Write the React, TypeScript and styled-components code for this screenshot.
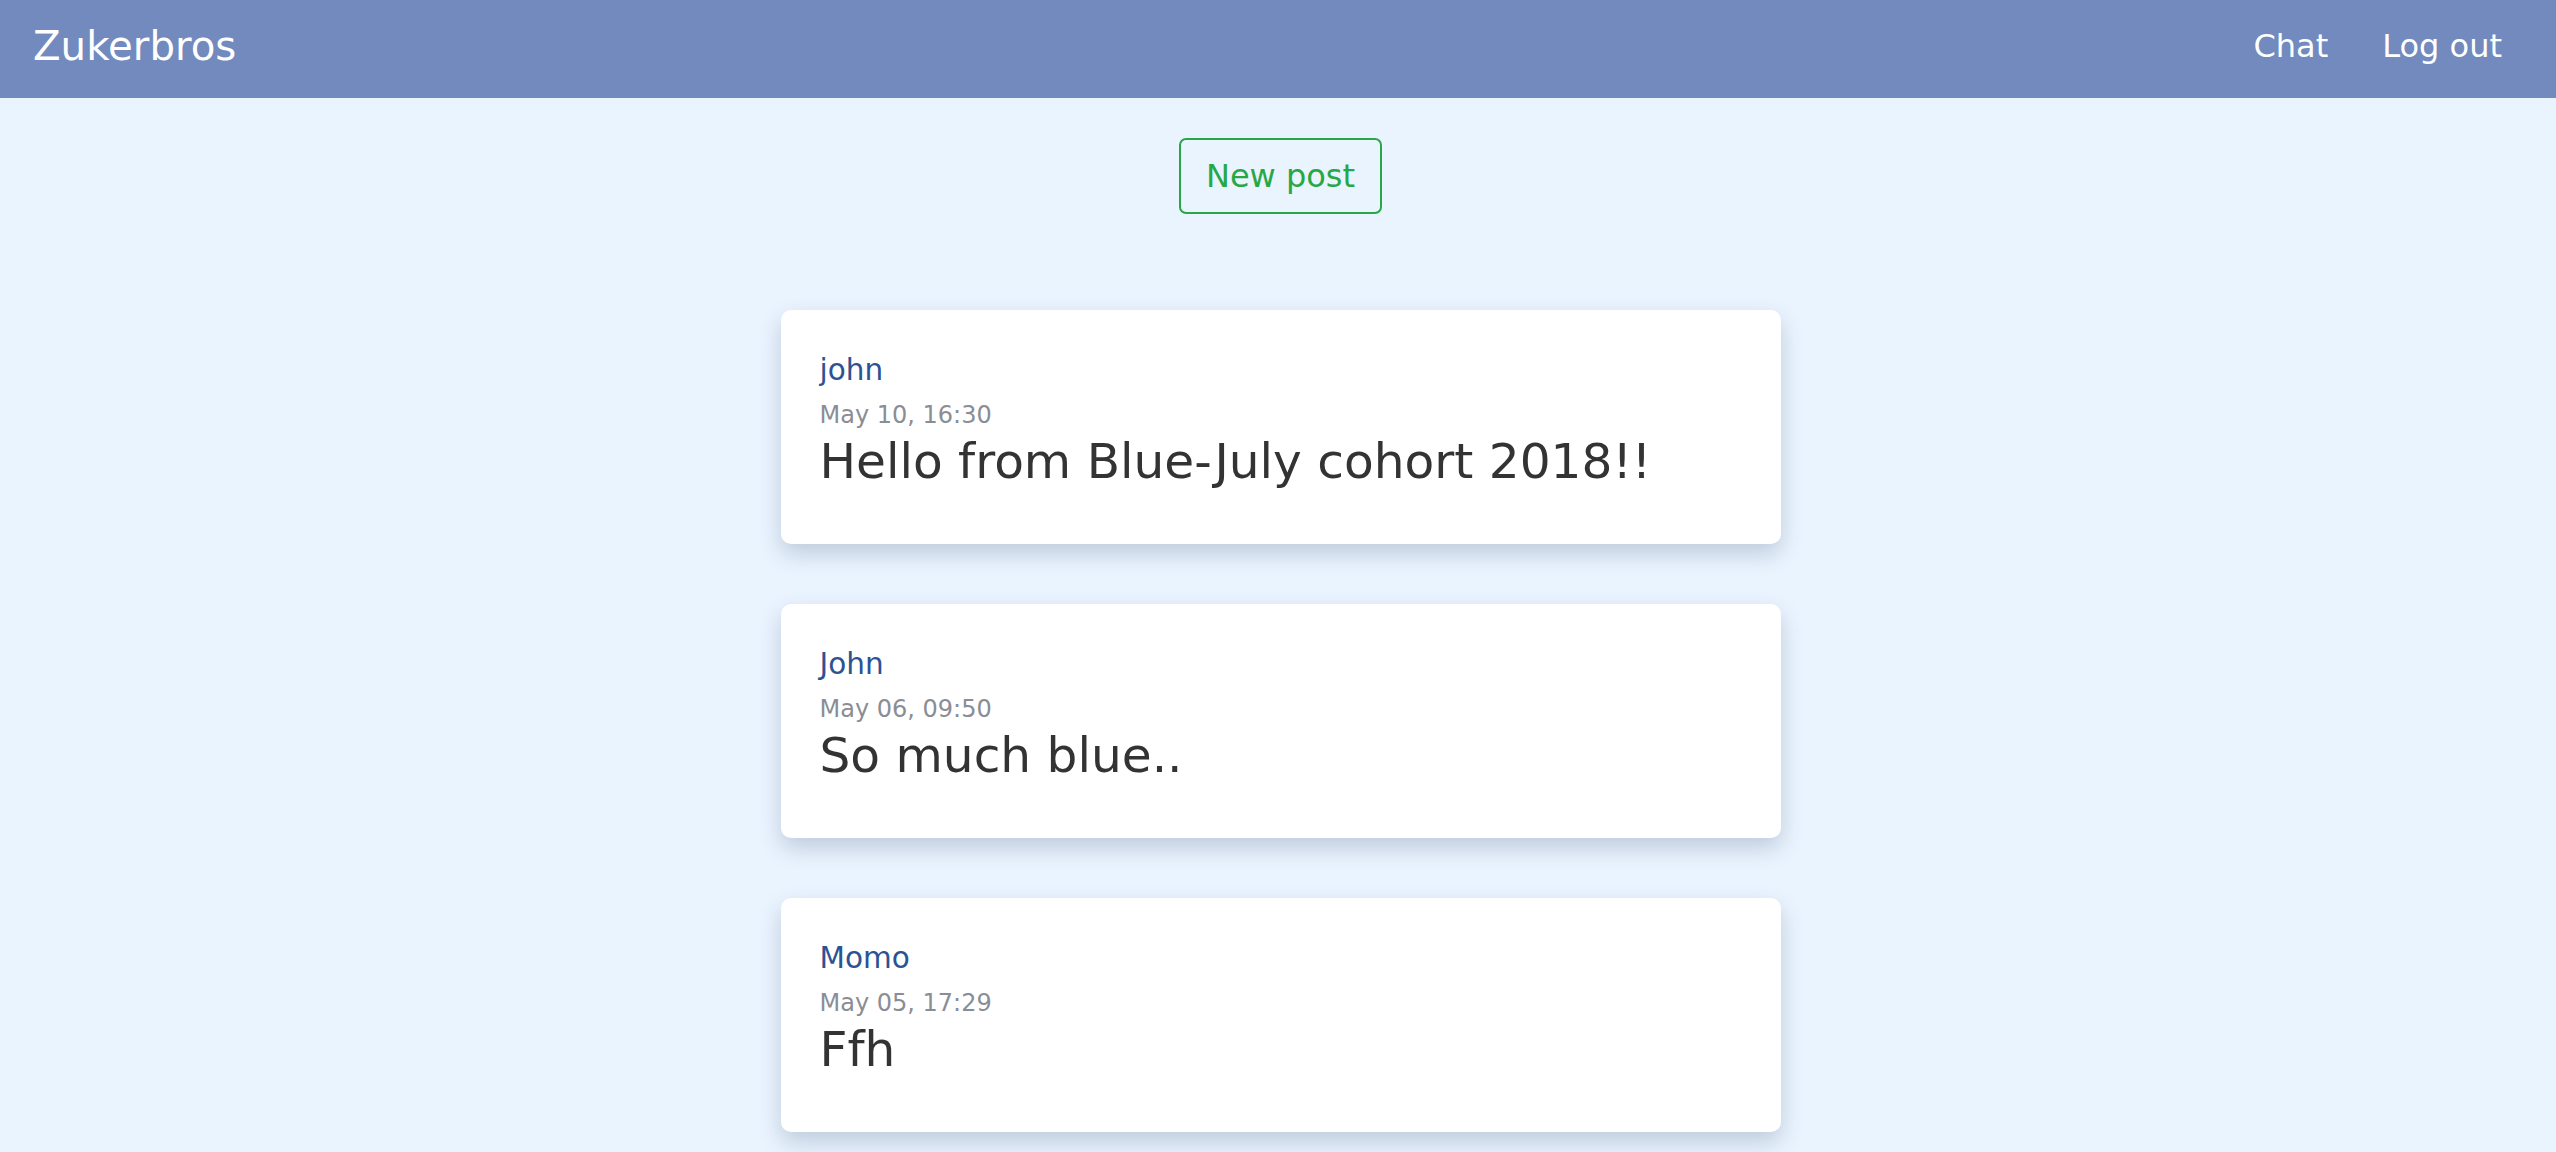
import styled, { createGlobalStyle } from "styled-components";

const GlobalStyle = createGlobalStyle`
  html, body {
    margin: 0;
    padding: 0;
  }

  body {
    background: #eaf4ff;
    font-family: "DejaVu Sans", Verdana, sans-serif;
    color: #333;
  }
`;

const NavBar = styled.header`
  display: flex;
  align-items: center;
  justify-content: space-between;
  height: 98px;
  padding: 0 27px 6px 33px;
  box-sizing: border-box;
  background: #728abe;
`;

const Brand = styled.a`
  font-size: 40.3px;
  color: #fff;
  text-decoration: none;
`;

const NavLinks = styled.nav`
  display: flex;
  align-items: center;
`;

const NavLink = styled.a`
  padding: 0 27px;
  font-size: 32px;
  color: #fff;
  text-decoration: none;
`;

const Main = styled.main`
  display: flex;
  flex-direction: column;
  align-items: center;
  padding: 40px 0 60px 5px;
`;

const NewPostButton = styled.button`
  padding: 17px 25px 16px;
  margin-bottom: 96px;
  font-family: inherit;
  font-size: 32px;
  line-height: 39px;
  color: #28a745;
  background: transparent;
  border: 2px solid #28a745;
  border-radius: 7px;
  cursor: pointer;
`;

const Feed = styled.section`
  display: flex;
  flex-direction: column;
  gap: 60px;
  width: 1000px;
`;

const PostCard = styled.article`
  padding: 39px 39px;
  background: #fff;
  border-radius: 10px;
  box-shadow: 0 10px 22px rgba(40, 62, 95, 0.22);
`;

const Author = styled.a`
  display: block;
  margin-bottom: 6px;
  font-size: 29.5px;
  line-height: 43px;
  color: #2c5292;
  text-decoration: none;
`;

const PostDate = styled.div`
  font-size: 24px;
  line-height: 34px;
  color: #8a8d96;
`;

const PostText = styled.p`
  margin: 0 0 15px;
  font-size: 48.6px;
  line-height: 58px;
  color: #333;
`;

type Post = {
  id: number;
  author: string;
  date: string;
  text: string;
};

const posts: Post[] = [
  { id: 1, author: "john", date: "May 10, 16:30", text: "Hello from Blue-July cohort 2018!!" },
  { id: 2, author: "John", date: "May 06, 09:50", text: "So much blue.." },
  { id: 3, author: "Momo", date: "May 05, 17:29", text: "Ffh" },
];

export default function App() {
  return (
    <>
      <GlobalStyle />
      <NavBar>
        <Brand href="#">Zukerbros</Brand>
        <NavLinks>
          <NavLink href="#">Chat</NavLink>
          <NavLink href="#">Log out</NavLink>
        </NavLinks>
      </NavBar>
      <Main>
        <NewPostButton>New post</NewPostButton>
        <Feed>
          {posts.map((post) => (
            <PostCard key={post.id}>
              <Author href="#">{post.author}</Author>
              <PostDate>{post.date}</PostDate>
              <PostText>{post.text}</PostText>
            </PostCard>
          ))}
        </Feed>
      </Main>
    </>
  );
}
